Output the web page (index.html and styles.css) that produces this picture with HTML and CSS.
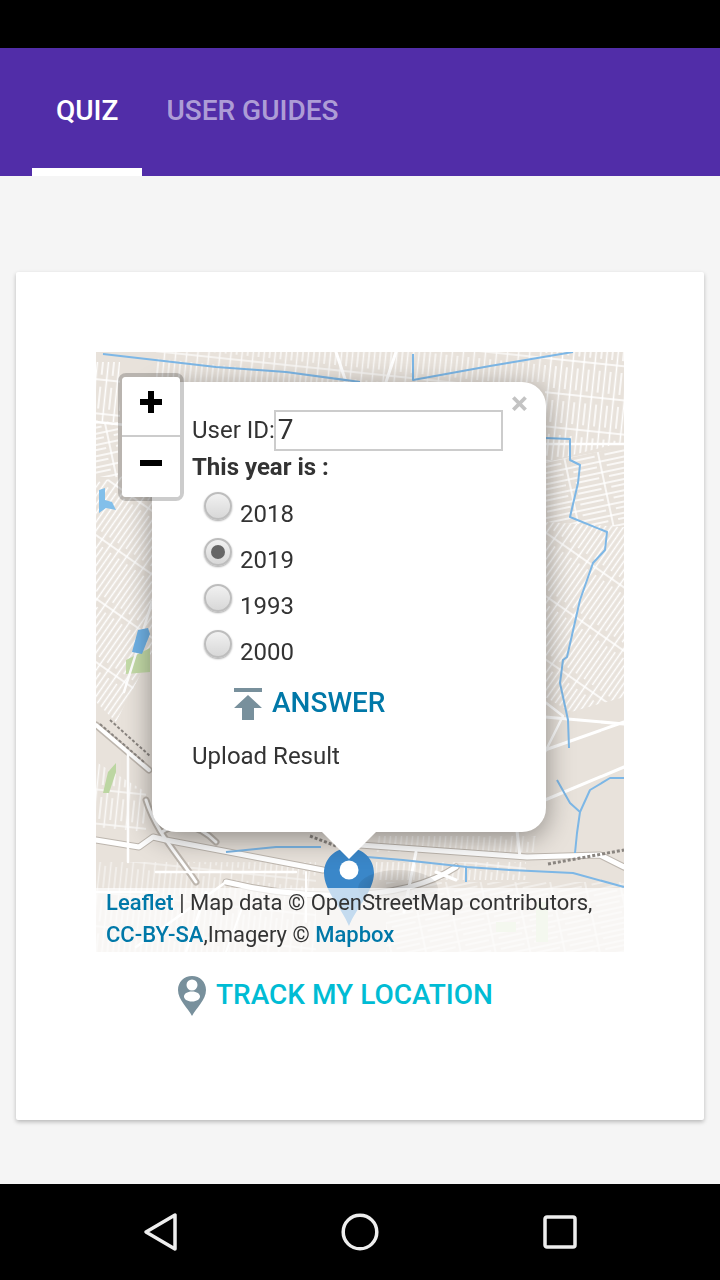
FILE: index.html
```html
<!DOCTYPE html>
<html lang="en">
<head>
    <meta charset="UTF-8">
    <meta name="viewport" content="width=device-width, initial-scale=1.0">
    <title>Quiz</title>
    <link rel="stylesheet" href="styles.css">
</head>
<body>
    <div class="status-bar"></div>

    <!-- Tabs -->
    <div class="tabs">
        <div class="tab active">QUIZ</div>
        <div class="tab">USER GUIDES</div>
    </div>

    <div class="content">
        <div class="card">
            <div class="map">
                <svg class="map-bg" viewBox="0 0 528 600" width="528" height="600">
                    <defs>
                        <pattern id="streetsA" width="11" height="34" patternUnits="userSpaceOnUse" patternTransform="rotate(6)">
                            <path d="M2.500 0V34M8 0V22M0 27H11" stroke="#fff" stroke-width="1.500" fill="none"/>
                        </pattern>
                        <pattern id="streetsB" width="10" height="52" patternUnits="userSpaceOnUse" patternTransform="rotate(35)">
                            <path d="M2.500 0V52M7.500 0V40M0 46H10" stroke="#fff" stroke-width="1.500" fill="none"/>
                        </pattern>
                        <pattern id="streetsC" width="34" height="11" patternUnits="userSpaceOnUse" patternTransform="rotate(-12)">
                            <path d="M0 3H34M0 8H24M28 0V11" stroke="#fff" stroke-width="1.500" fill="none"/>
                        </pattern>
                        <filter id="soft"><feGaussianBlur stdDeviation=".6"/></filter>
                    </defs>
                    <rect width="528" height="600" fill="#e8e2db"/>
                    <g filter="url(#soft)">
                        <!-- street blocks -->
                        <path d="M60 0H449V30H60Z" fill="url(#streetsA)" opacity=".8"/>
                        <path d="M449 0H528V90L449 110Z" fill="url(#streetsA)"/>
                        <path d="M449 110L528 95V175L449 170Z" fill="url(#streetsC)"/>
                        <path d="M449 170L528 175V345L475 360L449 345Z" fill="url(#streetsB)"/>
                        <path d="M0 130L56 118V300L20 370L0 350Z" fill="url(#streetsB)"/>
                        <path d="M0 10H24V70H0Z" fill="url(#streetsA)"/>
                        <path d="M0 70H22V125H0Z" fill="url(#streetsC)"/>
                        <path d="M0 410L50 440V480L0 475Z" fill="url(#streetsA)" opacity=".8"/>
                        <path d="M0 510H220V600H0Z" fill="url(#streetsA)" opacity=".55"/>
                        <path d="M290 530H528V600H290Z" fill="url(#streetsC)" opacity=".55"/>
                        <path d="M280 484H440V500H280Z" fill="url(#streetsA)" opacity=".6"/>
                        <path d="M280 510H430V528H280Z" fill="url(#streetsA)" opacity=".7"/>

                        <!-- parks -->
                        <path d="M7 441L12 420L20 411L20 420L13 441Z" fill="#bcd6a2"/>
                        <path d="M30 308L54 296V320L30 322Z" fill="#c4dba8"/>
                        <path d="M400 570H420V580H400ZM440 550H452V590H440Z" fill="#dbe8c8"/>

                        <!-- main roads -->
                        <g fill="none" stroke="#bdb6ae" stroke-width="7" stroke-linecap="round" stroke-linejoin="round">
                            <path d="M0 488L43 495L57 485L70 488L227 518"/>
                            <path d="M264 493L431 505L504 503L528 515"/>
                            <path d="M0 373L53 418"/>
                            <path d="M130 530C190 545 300 555 360 515"/>
                            <path d="M50 448C60 480 80 500 100 530"/>
                            <path d="M66 480C80 470 100 470 120 490"/>
                        </g>
                        <g fill="none" stroke="#fff" stroke-linecap="round" stroke-linejoin="round">
                            <path d="M0 488L43 495L57 485L70 488L227 518" stroke-width="5"/>
                            <path d="M264 493L431 505L504 503L528 515" stroke-width="5"/>
                            <path d="M0 373L53 418" stroke-width="4"/>
                            <path d="M130 530C190 545 300 555 360 515" stroke-width="5"/>
                            <path d="M50 448C60 480 80 500 100 530" stroke-width="3"/>
                            <path d="M66 480C80 470 100 470 120 490" stroke-width="3"/>
                            <path d="M449 365L528 372M449 398L528 370M449 448L528 415" stroke-width="3"/>
                            <path d="M449 92H528M449 350L467 364L449 400" stroke-width="2.500"/>
                            <path d="M32 400V510M28 340L56 250M0 70L60 76" stroke-width="2.500"/>
                            <path d="M420 470L424 505M300 0L290 30M240 0L250 30M320 500L308 560M340 520L360 528" stroke-width="3"/>
                            <path d="M40 595L130 530M60 520H200M110 540L90 600" stroke-width="2.500"/>
                            <path d="M0 540H60M150 545L130 600M210 520V570" stroke-width="2"/>
                        </g>
                        <path d="M4 372L48 410M14 368L54 404" stroke="#8a8580" stroke-width="2" stroke-dasharray="3 2" fill="none"/>
                        <path d="M452 512L528 498" stroke="#8a8580" stroke-width="3" stroke-dasharray="3 2" fill="none"/>
                        <path d="M214 484L240 494" stroke="#8a8580" stroke-width="3" stroke-dasharray="3 2" fill="none"/>

                        <!-- water -->
                        <path d="M3 138L9 136L9 148L16 150L20 158L10 156L3 161Z" fill="#82bfea"/>
                        <path d="M36 300L42 278L52 276L54 282L46 302Z" fill="#6fb2e6"/>

                        <!-- canals -->
                        <g fill="none" stroke="#7db7e6" stroke-width="2" stroke-linejoin="round">
                            <path d="M7 2L120 15L190 20L264 30"/>
                            <path d="M317 2V28L394 14L477 0"/>
                            <path d="M449 86L474 87V108L484 113L482 131L474 165L511 180L509 198L497 211L484 248L471 305L467 308L464 331L472 368L473 396"/>
                            <path d="M461 428L474 451L484 460L481 481L479 501"/>
                            <path d="M484 460L494 438L514 426H528"/>
                            <path d="M271 505L307 508L371 515L414 518L477 521L528 535"/>
                            <path d="M130 500L180 495L225 495"/>
                            <path d="M370 515V530"/>
                        </g>
                    </g>
                </svg>

                <!-- Marker -->
                <svg class="marker" viewBox="0 0 50 78" width="50" height="78">
                    <path d="M25 0C11 0 0 11 0 25C0 43 18 60 25 78C32 60 50 43 50 25C50 11 39 0 25 0Z" fill="#3a87c9"/>
                    <circle cx="25" cy="22" r="9.500" fill="#fff"/>
                </svg>
                <div class="marker-shadow"></div>

                <!-- Attribution -->
                <div class="attribution">
                    <div class="attribution-text">
                        <a>Leaflet</a> | Map data © OpenStreetMap contributors, <a>CC-BY-SA</a>,Imagery © <a>Mapbox</a>
                    </div>
                </div>

                <!-- Popup -->
                <div class="popup">
                    <span class="popup-close">×</span>
                    <div class="user-row">
                        <span class="user-label">User ID:</span><div class="user-input">7</div>
                    </div>
                    <div class="question">This year is :</div>
                    <div class="option"><span class="radio"></span><span class="option-label">2018</span></div>
                    <div class="option"><span class="radio checked"></span><span class="option-label">2019</span></div>
                    <div class="option"><span class="radio"></span><span class="option-label">1993</span></div>
                    <div class="option"><span class="radio"></span><span class="option-label">2000</span></div>
                    <div class="answer">
                        <svg viewBox="0 0 30 32" width="30" height="32">
                            <path d="M1 0H29V4H1ZM15 7L29 20H21V32H9V20H1Z" fill="#78909c"/>
                        </svg>
                        <span class="answer-label">ANSWER</span>
                    </div>
                    <div class="upload">Upload Result</div>
                </div>
                <div class="popup-tip"></div>

                <!-- Zoom -->
                <div class="zoom">
                    <div class="zoom-btn">
                        <svg viewBox="0 0 22 22" width="22" height="22"><path d="M8 0H14V8H22V14H14V22H8V14H0V8H8Z"/></svg>
                    </div>
                    <div class="zoom-btn">
                        <svg viewBox="0 0 22 22" width="22" height="22"><path d="M0 8H22V14H0Z"/></svg>
                    </div>
                </div>
            </div>

            <div class="track">
                <svg viewBox="0 0 28 40" width="28" height="40">
                    <path fill-rule="evenodd" d="M14 0C6 0 0 6 0 14C0 24 10 32 14 40C18 32 28 24 28 14C28 6 22 0 14 0ZM14 3.500A5.500 5.500 0 1 1 14 14.500A5.500 5.500 0 1 1 14 3.500ZM14 15.500C19 15.500 22 18 22 20.500C22 23 19 25.500 14 25.500C9 25.500 6 23 6 20.500C6 18 9 15.500 14 15.500Z" fill="#78909c"/>
                </svg>
                <span>TRACK MY LOCATION</span>
            </div>
        </div>
    </div>

    <!-- Android nav -->
    <div class="nav-bar">
        <svg viewBox="0 0 36 40" width="36" height="40">
            <path d="M32 3V37L3 20Z" fill="none" stroke="#eee" stroke-width="3.500" stroke-linejoin="round"/>
        </svg>
        <svg class="nav-home" viewBox="0 0 38 38" width="38" height="38">
            <circle cx="19" cy="19" r="16.800" fill="none" stroke="#eee" stroke-width="3.500"/>
        </svg>
        <svg viewBox="0 0 34 34" width="34" height="34">
            <rect x="2" y="2" width="30" height="30" rx="2" fill="none" stroke="#eee" stroke-width="3.500"/>
        </svg>
    </div>
</body>
</html>
```

FILE: styles.css
```css
* {
    box-sizing: border-box;
    margin: 0;
    padding: 0;
}

body {
    font-family: Roboto, 'Noto Sans', sans-serif;
    width: 720px;
    height: 1280px;
    overflow: hidden;
    background-color: #f5f5f5;
    display: flex;
    flex-direction: column;
}

.status-bar {
    height: 48px;
    background-color: #000;
}

.tabs {
    height: 128px;
    padding-left: 32px;
    background-color: #512da8;
    display: flex;
}

.tab {
    padding: 45px 24px 0;
    font-size: 28px;
    line-height: 36px;
    font-weight: 500;
    color: rgba(255, 255, 255, 0.55);
}

.tab.active {
    color: #fff;
    border-bottom: 8px solid #fff;
}

.content {
    height: 1008px;
    padding: 96px 16px 0;
}

.card {
    height: 848px;
    padding: 80px 80px 0;
    background-color: #fff;
    border-radius: 2px;
    box-shadow: 0 2px 4px rgba(0, 0, 0, 0.25);
}

.map {
    position: relative;
    width: 528px;
    height: 600px;
    overflow: hidden;
    font-size: 24px;
    color: #333;
}

.map-bg {
    display: block;
}

.marker {
    position: absolute;
    left: 228px;
    top: 496px;
}

.marker-shadow {
    position: absolute;
    left: 262px;
    top: 518px;
    width: 80px;
    height: 36px;
    border-radius: 50%;
    background: radial-gradient(rgba(0, 0, 0, 0.25), rgba(0, 0, 0, 0));
}

.attribution {
    position: absolute;
    left: 0;
    right: 0;
    bottom: 0;
    height: 64px;
    padding: 0 10px;
    font-size: 22px;
    line-height: 32px;
    background-color: rgba(255, 255, 255, 0.7);
}

.attribution-text {
    margin-top: -1px;
}

.attribution a {
    font-weight: 500;
    color: #0078a8;
}

.popup {
    position: absolute;
    left: 56px;
    top: 30px;
    width: 394px;
    height: 450px;
    padding: 28px 40px 0;
    background-color: #fff;
    border-radius: 24px;
    box-shadow: 0 6px 28px rgba(0, 0, 0, 0.4);
}

.popup-tip {
    position: absolute;
    left: 226px;
    top: 480px;
    border-left: 27px solid transparent;
    border-right: 27px solid transparent;
    border-top: 27px solid #fff;
}

.popup-close {
    position: absolute;
    right: 18px;
    top: 6px;
    font-size: 32px;
    line-height: 30px;
    font-weight: 700;
    color: #c3c3c3;
}

.user-row {
    display: flex;
    align-items: center;
    height: 41px;
}

.user-label {
    padding-bottom: 2px;
}

.user-input {
    width: 229px;
    height: 41px;
    margin-left: -1px;
    padding-left: 2px;
    border: 2px solid #ccc;
    font-size: 28px;
    line-height: 36px;
}

.question {
    line-height: 32px;
    font-weight: 700;
}

.option {
    display: flex;
    height: 46px;
    padding-left: 12px;
}

.radio {
    width: 28px;
    height: 28px;
    margin-top: 9px;
    border-radius: 50%;
    border: 2px solid #bdbdbd;
    background: linear-gradient(#f1f1f1, #d8d8d8);
    box-shadow: 0 1px 2px rgba(0, 0, 0, 0.35);
    display: flex;
    align-items: center;
    justify-content: center;
}

.radio.checked::after {
    content: "";
    width: 14px;
    height: 14px;
    border-radius: 50%;
    background-color: #666;
}

.option-label {
    margin-left: 8px;
    padding-top: 15px;
    line-height: 32px;
}

.answer {
    display: flex;
    align-items: center;
    gap: 9px;
    margin: 21px 0 0 41px;
    height: 32px;
    font-size: 28px;
    font-weight: 500;
    color: #0078a8;
}

.answer-label {
    margin-bottom: 4px;
}

.upload {
    margin-top: 20px;
    line-height: 32px;
}

.zoom {
    position: absolute;
    left: 22px;
    top: 21px;
    width: 66px;
    border: 4px solid rgba(0, 0, 0, 0.2);
    border-radius: 8px;
    background-clip: padding-box;
}

.zoom-btn {
    height: 60px;
    padding-bottom: 8px;
    background-color: #fff;
    display: flex;
    align-items: center;
    justify-content: center;
}

.zoom-btn:first-child {
    border-bottom: 2px solid #ccc;
    border-radius: 4px 4px 0 0;
}

.zoom-btn:last-child {
    border-radius: 0 0 4px 4px;
}

.track {
    display: flex;
    align-items: center;
    gap: 10px;
    height: 40px;
    margin: 24px 0 0 82px;
    font-size: 28px;
    font-weight: 500;
    color: #00bcd4;
}

.track span {
    margin-bottom: 4px;
}

.nav-bar {
    position: absolute;
    left: 0;
    right: 0;
    top: 1184px;
    height: 96px;
    background-color: #000;
    padding: 0 143px;
    display: flex;
    align-items: center;
    justify-content: space-between;
}

.nav-home {
    margin-left: -2px;
}
```
